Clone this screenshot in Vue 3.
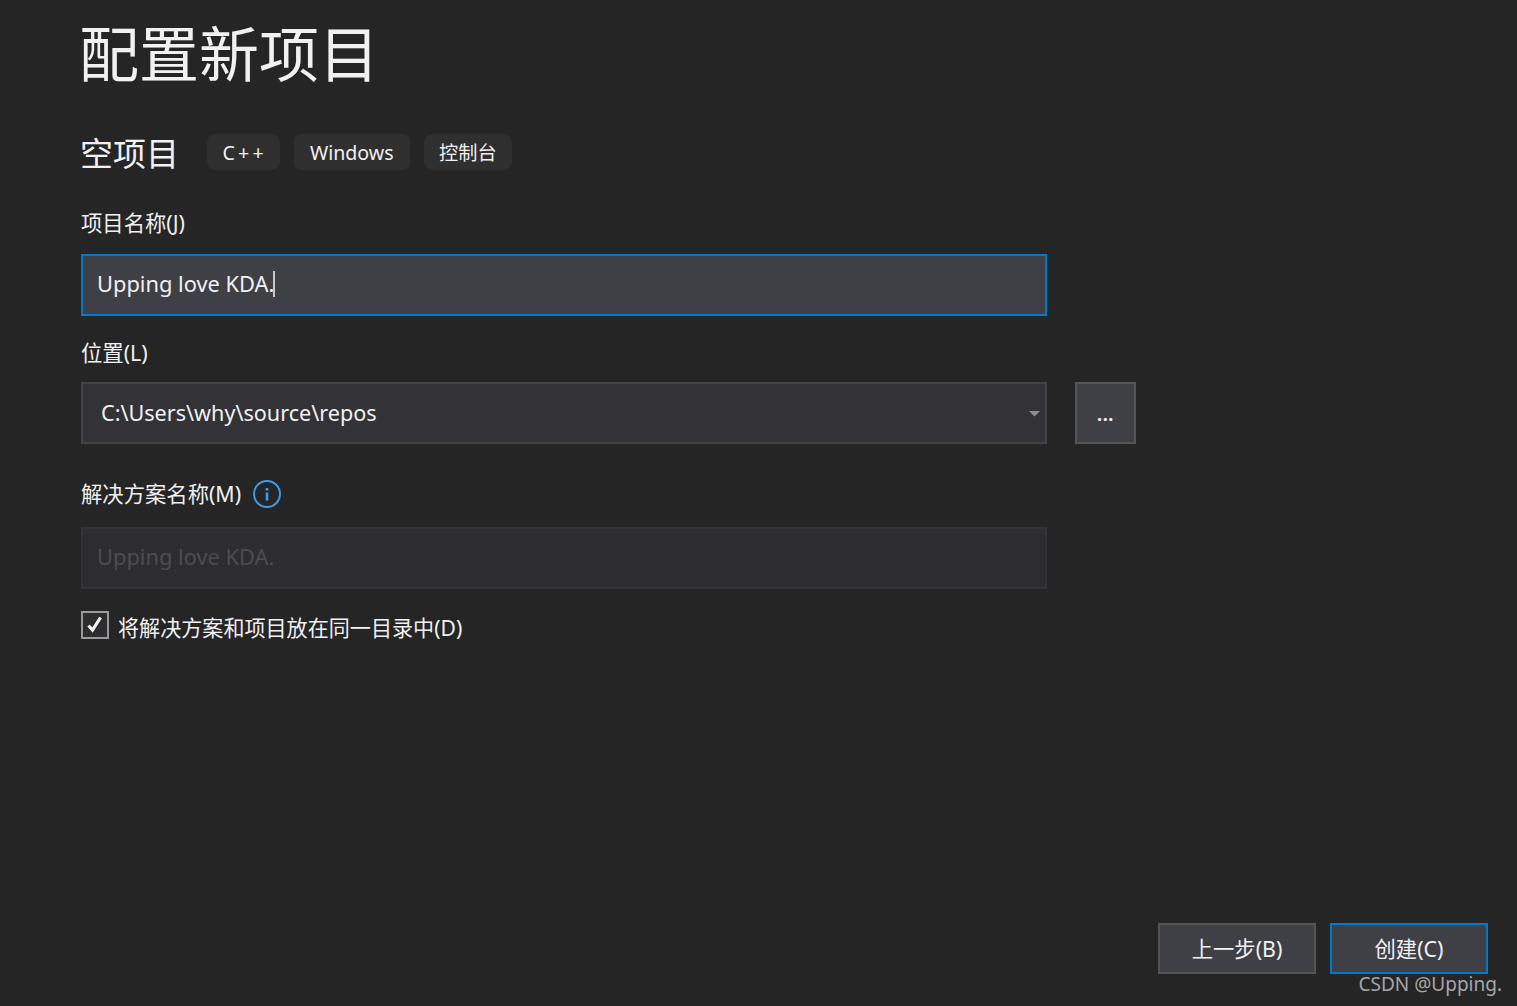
<script setup>
const tags = [
  { text: 'C++', cls: 'cpp' },
  { text: 'Windows', cls: '' },
  { text: '控制台', cls: 'cjk' }
]
</script>

<template>
  <div class="page">
    <h1 class="title">配置新项目</h1>
    <div class="subhead">
      <h2 class="template">空项目</h2>
      <div class="tags">
        <span v-for="t in tags" :key="t.text" class="tag" :class="t.cls">{{ t.text }}</span>
      </div>
    </div>

    <label class="label first">项目名称(J)</label>
    <div class="field focus">
      <span class="txt">Upping love KDA.</span><i class="caret"></i>
    </div>

    <label class="label loc">位置(L)</label>
    <div class="row">
      <div class="field combo">
        <span class="txt">C:\Users\why\source\repos</span>
        <svg class="arrow" width="11" height="6" viewBox="0 0 11 6"><path d="M0 0h11L5.5 5.5z" fill="#8e8e90" /></svg>
      </div>
      <div class="browse"><span>...</span></div>
    </div>

    <div class="label sol">
      <span>解决方案名称(M)</span>
      <svg class="info" width="28" height="28" viewBox="0 0 28 28">
        <circle cx="14" cy="14" r="13" fill="none" stroke="#3a9bea" stroke-width="2" />
        <rect x="12.7" y="12.5" width="2.6" height="8" fill="#3a9bea" />
        <rect x="12.7" y="8" width="2.6" height="2.6" fill="#3a9bea" />
      </svg>
    </div>
    <div class="field disabled"><span class="txt">Upping love KDA.</span></div>

    <div class="check">
      <span class="box">
        <svg width="20" height="20" viewBox="0 0 20 20"><path d="M3.5 10.5l4 4.5L15.5 2.5" fill="none" stroke="#f1f1f1" stroke-width="3.2" /></svg>
      </span>
      <span class="check-text">将解决方案和项目放在同一目录中(D)</span>
    </div>

    <div class="footer">
      <button class="btn"><span class="btn-text">上一步(B)</span></button>
      <button class="btn primary"><span class="btn-text">创建(C)</span></button>
    </div>
    <div class="watermark">CSDN @Upping.</div>
  </div>
</template>

<style>
html, body { margin: 0; background: #252526; }
</style>

<style scoped>
.page {
  position: relative;
  box-sizing: border-box;
  width: 1517px;
  height: 1006px;
  padding: 0 29px 32px 81px;
  display: flex;
  flex-direction: column;
  overflow: hidden;
  background: #252526;
  color: #f1f1f1;
  font-family: "Noto Sans", "Noto Sans CJK SC", sans-serif;
  font-size: 21.33px;
}
.title {
  margin: 0 0 0 -2px;
  height: 110px;
  padding-top: 11px;
  box-sizing: border-box;
  font-size: 60px;
  line-height: 80px;
  font-weight: 400;
  font-family: "Noto Sans CJK SC", sans-serif;
}
.subhead {
  display: flex;
  align-items: center;
  height: 36px;
  margin-top: 24px;
}
.template {
  margin: 0 27.5px 0 -1px;
  font-size: 33px;
  line-height: 40px;
  font-weight: 400;
  font-family: "Noto Sans CJK SC", sans-serif;
}
.tags { display: flex; gap: 14px; }
.tag {
  height: 36px;
  padding: 0 16px;
  border-radius: 8px;
  background: #2f2f2f;
  font-size: 19.6px;
  line-height: 38px;
  white-space: nowrap;
}
.cpp { letter-spacing: 3.2px; padding-right: 13px; }
.cjk { padding: 0 15.5px 0 15.5px; font-size: 19.2px; }
.label {
  display: flex;
  align-items: center;
  height: 28px;
  line-height: 26px;
  font-size: 21.33px;
}
.first { margin-top: 39px; margin-bottom: 17px; }
.loc { margin-top: 23px; margin-bottom: 15px; }
.sol { margin-top: 36px; margin-bottom: 19px; gap: 12px; }
.field {
  position: relative;
  box-sizing: border-box;
  width: 966px;
  height: 62px;
  display: flex;
  align-items: center;
  padding: 0 14px;
  font-size: 21.6px;
}
.txt { line-height: 28px; }
.focus .txt { margin-bottom: 3px; font-size: 21.85px; }
.focus { background: #3f3f46; border: 2px solid #007acc; }
.caret {
  width: 2px;
  height: 26px;
  margin-left: -1px;
  margin-bottom: 2px;
  background: #c8c8c8;
}
.row { display: flex; gap: 28px; }
.combo {
  background: #333337;
  border: 2px solid #434346;
  padding-left: 18px;
}
.combo .txt { margin-bottom: 1px; }
.arrow { position: absolute; right: 5px; top: 27px; }
.browse {
  box-sizing: border-box;
  width: 61px;
  height: 62px;
  background: #3f3f46;
  border: 2px solid #555555;
  display: flex;
  justify-content: center;
  align-items: center;
  font-size: 18px;
  font-weight: 700;
  letter-spacing: 0.6px;
  padding-top: 1px;
}
.disabled {
  background: #2d2d30;
  border: 2px solid #333337;
  color: #4b4c50;
}
.disabled .txt { margin-bottom: 3px; font-size: 21.85px; }
.info { flex: none; }
.check {
  display: flex;
  align-items: flex-start;
  margin-top: 22px;
}
.box {
  box-sizing: border-box;
  width: 28px;
  height: 28px;
  border: 2px solid #999999;
  background: #2d2d30;
  display: flex;
  align-items: center;
  justify-content: center;
}
.check-text {
  margin-left: 9px;
  margin-top: 2px;
  line-height: 30px;
  font-size: 21.08px;
}
.footer {
  margin-top: auto;
  display: flex;
  justify-content: flex-end;
  gap: 14px;
}
.btn {
  box-sizing: border-box;
  width: 158px;
  height: 51px;
  background: #3f3f46;
  border: 2px solid #555555;
  color: #f1f1f1;
  font-family: inherit;
  font-size: 21.33px;
  padding: 0;
}
.btn-text { line-height: 28px; }
.primary { border-color: #007acc; }
.watermark {
  position: absolute;
  right: 15px;
  top: 969px;
  font-size: 19px;
  line-height: 30px;
  color: #a6a6a6;
}
</style>
